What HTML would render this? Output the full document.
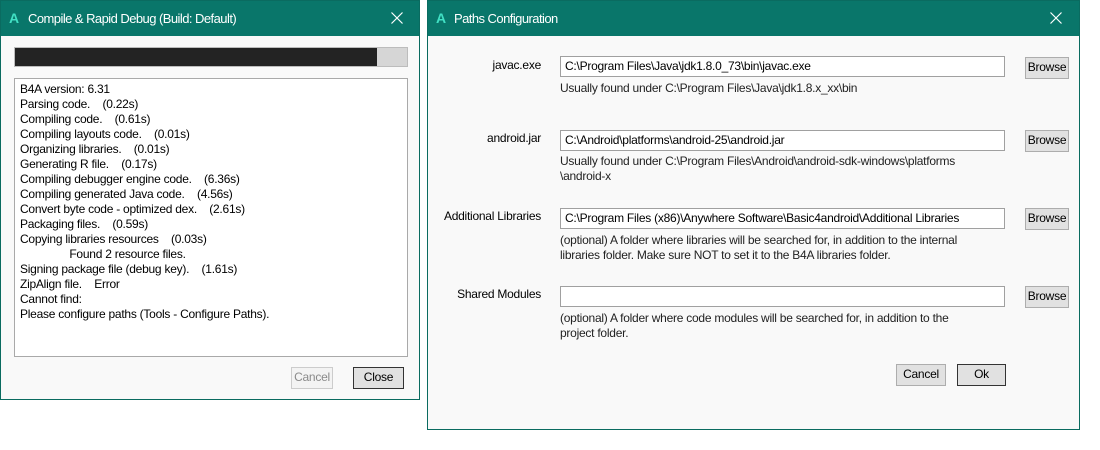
<!DOCTYPE html>
<html><head><style>
*{margin:0;padding:0;box-sizing:border-box}
body{width:1100px;height:450px;background:#fff;position:relative;overflow:hidden;font-family:"Liberation Sans",sans-serif;font-size:12px;color:#000;letter-spacing:-0.25px}
.win{position:absolute;border:1px solid #0a6b60;background:#f9f9f9}
.tb{position:absolute;left:0;top:0;right:0;height:35px;background:#09766a;color:#fff;font-size:13px;letter-spacing:-0.55px}
.tb .a{position:absolute;left:8px;top:9px;color:#41e0c4;font-weight:bold;font-size:14px}
.tb .t{position:absolute;left:27px;top:10px}
.tb svg{position:absolute;top:11px}
.abs{position:absolute}
.btn{position:absolute;border:1px solid #adadad;background:#e1e1e1;text-align:center;line-height:19px;height:22px}
.inp{position:absolute;border:1px solid #a0a0a0;background:#fff;height:21px;line-height:19px;padding-left:4px;left:132px;width:445px;white-space:nowrap;overflow:hidden}
.lbl{position:absolute;text-align:right}
.hint{position:absolute;left:132px;color:#222;line-height:15px;white-space:nowrap}
.br{left:597px;width:44px}
</style></head><body>
<div class="win" style="left:0;top:0;width:420px;height:400px">
 <div class="tb"><span class="a">A</span><span class="t">Compile &amp; Rapid Debug (Build: Default)</span><svg style="left:390px" width="12" height="12" viewBox="0 0 12 12"><path d="M0.5 0.5L11.5 11.5M11.5 0.5L0.5 11.5" stroke="#fff" stroke-width="1.2"/></svg></div>
 <div class="abs" style="left:13px;top:46px;width:394px;height:20px;background:#d6d6d6;border:1px solid #bcbcbc"><div style="width:362px;height:18px;background:#232323"></div></div>
 <div class="abs" style="left:13px;top:77px;width:394px;height:279px;background:#fff;border:1px solid #a9a9a9;padding:3px 0 0 5px;line-height:15px;white-space:pre">B4A version: 6.31
Parsing code.    (0.22s)
Compiling code.    (0.61s)
Compiling layouts code.    (0.01s)
Organizing libraries.    (0.01s)
Generating R file.    (0.17s)
Compiling debugger engine code.    (6.36s)
Compiling generated Java code.    (4.56s)
Convert byte code - optimized dex.    (2.61s)
Packaging files.    (0.59s)
Copying libraries resources    (0.03s)
                Found 2 resource files.
Signing package file (debug key).    (1.61s)
ZipAlign file.    Error
Cannot find:
Please configure paths (Tools - Configure Paths).</div>
 <div class="btn" style="left:290px;top:366px;width:42px;background:#f3f3f3;border-color:#ccc;color:#8a8a8a">Cancel</div>
 <div class="btn" style="left:352px;top:366px;width:51px;border-color:#333">Close</div>
</div>
<div class="win" style="left:427px;top:0;width:653px;height:430px">
 <div class="tb"><span class="a">A</span><span class="t" style="left:26px">Paths Configuration</span><svg style="left:622px" width="12" height="12" viewBox="0 0 12 12"><path d="M0.5 0.5L11.5 11.5M11.5 0.5L0.5 11.5" stroke="#fff" stroke-width="1.2"/></svg></div>
 <div class="lbl" style="top:57px;left:0;width:113px">javac.exe</div>
 <div class="inp" style="top:55px">C:\Program Files\Java\jdk1.8.0_73\bin\javac.exe</div>
 <div class="btn br" style="top:56px">Browse</div>
 <div class="hint" style="top:80px">Usually found under C:\Program Files\Java\jdk1.8.x_xx\bin</div>

 <div class="lbl" style="top:130px;left:0;width:113px">android.jar</div>
 <div class="inp" style="top:129px">C:\Android\platforms\android-25\android.jar</div>
 <div class="btn br" style="top:129px">Browse</div>
 <div class="hint" style="top:153px">Usually found under C:\Program Files\Android\android-sdk-windows\platforms<br>\android-x</div>

 <div class="lbl" style="top:208px;left:0;width:113px">Additional Libraries</div>
 <div class="inp" style="top:207px">C:\Program Files (x86)\Anywhere Software\Basic4android\Additional Libraries</div>
 <div class="btn br" style="top:207px">Browse</div>
 <div class="hint" style="top:232px">(optional) A folder where libraries will be searched for, in addition to the internal<br>libraries folder. Make sure NOT to set it to the B4A libraries folder.</div>

 <div class="lbl" style="top:286px;left:0;width:113px">Shared Modules</div>
 <div class="inp" style="top:285px"></div>
 <div class="btn br" style="top:285px">Browse</div>
 <div class="hint" style="top:310px">(optional) A folder where code modules will be searched for, in addition to the<br>project folder.</div>

 <div class="btn" style="left:468px;top:363px;width:50px">Cancel</div>
 <div class="btn" style="left:529px;top:363px;width:49px;border-color:#333">Ok</div>
</div>
</body></html>
